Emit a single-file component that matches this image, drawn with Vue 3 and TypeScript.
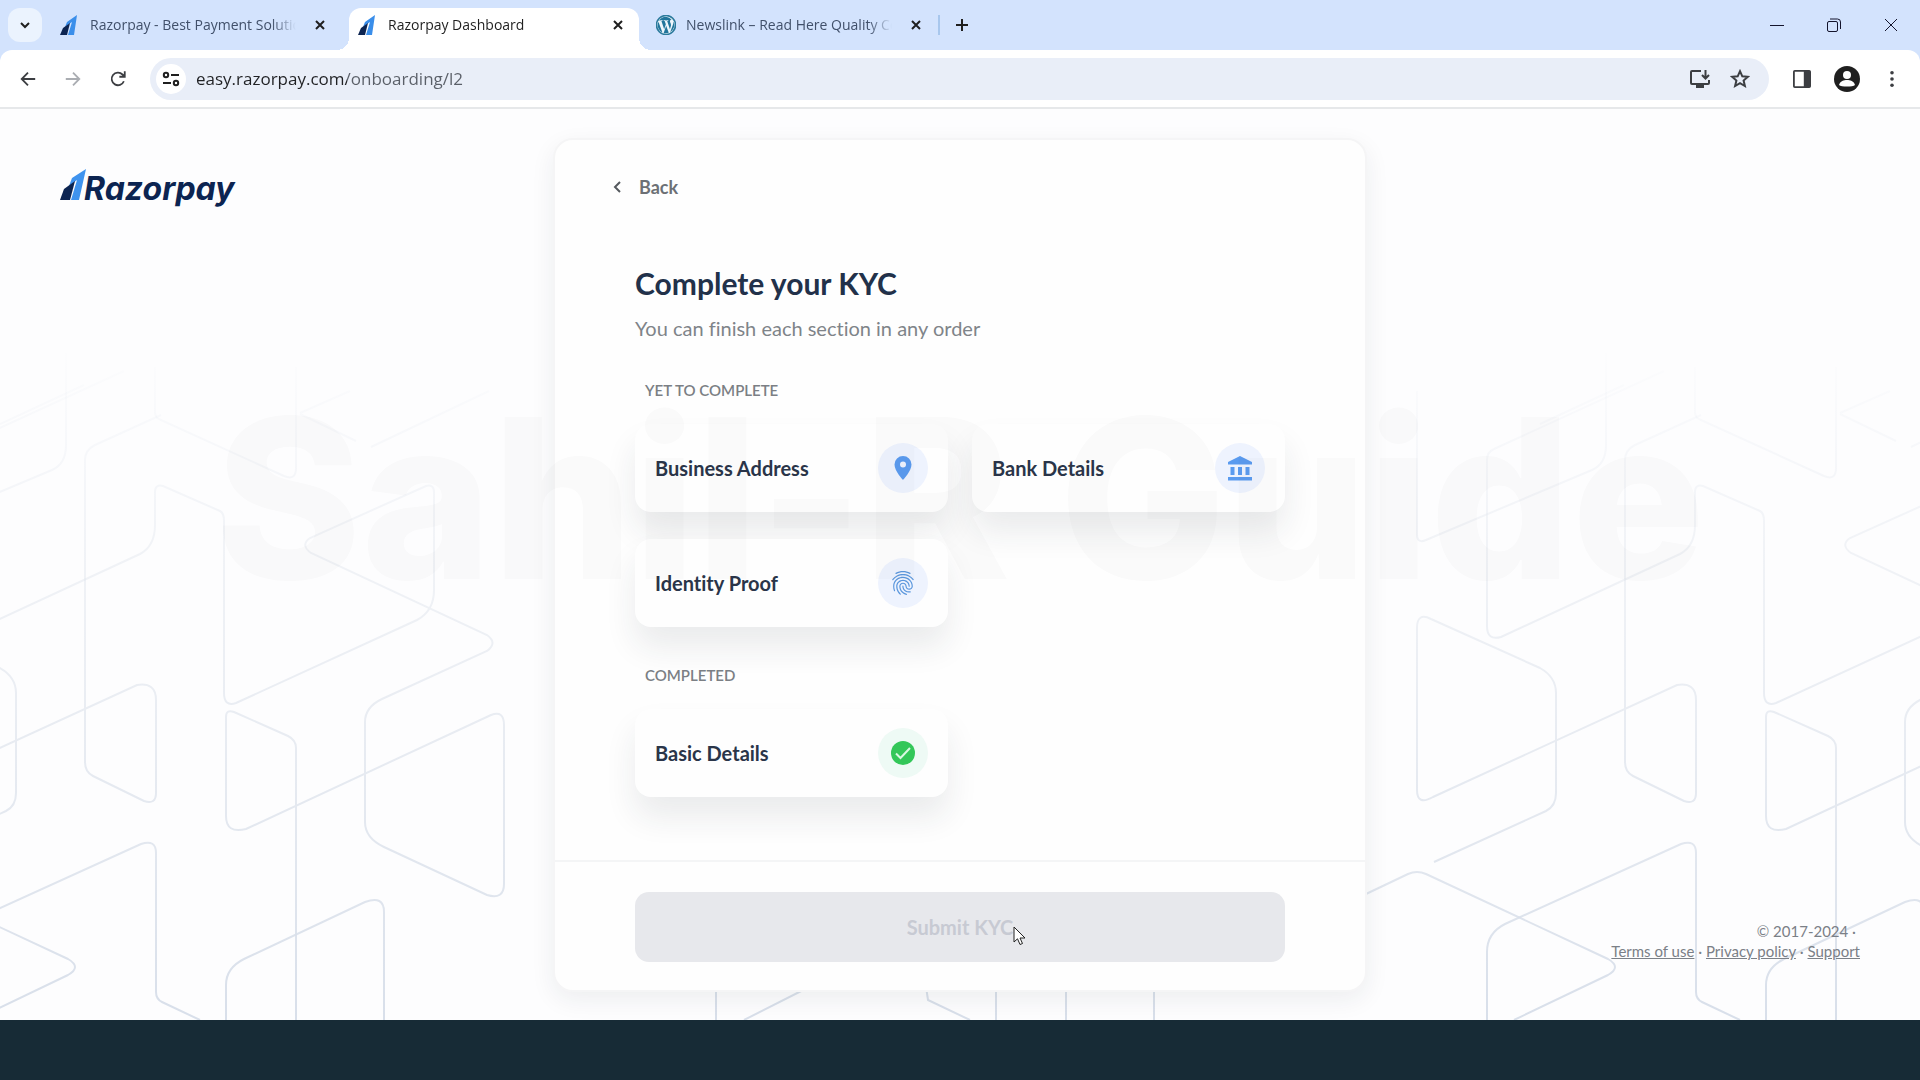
<script setup lang="ts">
import { ref } from 'vue'

interface Tab { title: string; icon: 'razorpay' | 'wordpress'; active: boolean }
interface Section { title: string; icon: 'pin' | 'bank' | 'finger' | 'check' }

const tabs: Tab[] = [
  { title: 'Razorpay - Best Payment Solution', icon: 'razorpay', active: false },
  { title: 'Razorpay Dashboard', icon: 'razorpay', active: true },
  { title: 'Newslink – Read Here Quality Content', icon: 'wordpress', active: false },
]

const url = ref('easy.razorpay.com/onboarding/l2')

const pending: Section[] = [
  { title: 'Business Address', icon: 'pin' },
  { title: 'Bank Details', icon: 'bank' },
  { title: 'Identity Proof', icon: 'finger' },
]
const completed: Section[] = [{ title: 'Basic Details', icon: 'check' }]
const groups = [
  { label: 'YET TO COMPLETE', items: pending },
  { label: 'COMPLETED', items: completed },
]

// Outlines of the backdrop; the set repeats every 1540 units.
const outlines: string[] = [
  'M1417 391V534Q1417 544 1426 540L1592 470Q1606 464 1606 445V353',
  'M1664 371L1494 449Q1487 452 1487 460V626Q1487 641 1501 637L1680 554Q1695 546 1695 525V492Q1695 484 1703 486L1760 511Q1764 513 1764 521V693Q1764 707 1776 703L1957 620Q1974 611 1974 590V492Q1974 484 1966 486L1850 538Q1840 545 1851 553L2027 635Q2038 643 2027 651L1922 699Q1905 707 1905 722V822Q1905 838 1924 847L2027 895Q2044 900 2044 884V725Q2044 710 2031 715L1786 829Q1766 834 1766 816V717Q1766 709 1774 712L1828 736Q1836 740 1836 748V1020',
  'M1701 415L1635 445Q1625 450 1625 460V762Q1625 772 1633 776L1684 801Q1696 805 1696 793V700Q1696 682 1677 685L1433 797Q1417 806 1417 790V628Q1417 612 1431 619L1540 668Q1556 677 1556 693V793Q1556 806 1546 811L1434 862',
  'M1366 894L1408 874Q1417 870 1426 874L1608 959Q1622 967 1608 975L1514 1020',
  'M1487 1020V952Q1487 933 1505 924L1681 844Q1696 839 1696 853V992Q1696 999 1702 1002L1740 1020',
  'M1766 1020V985Q1766 968 1784 959L1905 902Q1924 895 1924 912V1020',
  'M1695 367V412Q1695 418 1701 420L1824 476Q1836 481 1836 468V367',
  'M1540 424L1624 385M1840 413L1890 391M1911 447L2029 391M1840 414L1896 441',
]
</script>

<template>
  <div class="app">
    <header class="browser">
      <div class="strip">
        <button class="search" aria-label="Search tabs">
          <svg width="12" height="12" viewBox="0 0 12 12"><path d="M2 4l4 4 4-4" /></svg>
        </button>
        <div v-for="t in tabs" :key="t.title" class="tab" :class="{ active: t.active }">
          <div class="tab-body">
            <svg v-if="t.icon === 'razorpay'" class="fav" viewBox="0 0 20 20">
              <path d="M17 0L7 7 5 12l7-5-4 13h6z" fill="#3a8eea" />
              <path d="M3 13L10 8 7 20H0z" fill="#0c2451" />
            </svg>
            <svg v-else class="fav" viewBox="0 0 24 24">
              <circle cx="12" cy="12" r="11.4" fill="#eef6fb" stroke="#2b7a9c" />
              <path fill="#21759b" d="M12 2C8.500 2 5.400 3.800 3.700 6.500c2 .1 3.800-.1 3.800-.1.500 0 .600.700 0 .7l-1 .1 3.300 10 2-6-1.400-4c-.5 0-.9-.1-.9-.1-.500 0-.4-.8 0-.7 0 0 1.500.1 2.400.1l2.500-.1c.5 0 .5.700 0 .7l-1 .1 3.300 9.900.9-3c1.200-3.600-.8-4.700-.8-6.300 0-1.300.9-2.200 1.900-2.300A10 10 0 0 0 12 2zM2.900 8A10 10 0 0 0 7.700 21zM12.200 13L9.200 21.600a10 10 0 0 0 6.100-.2zM20.900 7.500c.2 1.400-.1 2.900-.7 4.500L17 20.600A10 10 0 0 0 20.900 7.500z" />
            </svg>
            <span class="tab-title">{{ t.title }}</span>
            <button class="tab-close" aria-label="Close tab">
              <svg width="10" height="10" viewBox="0 0 10 10"><path d="M1 1l8 8M9 1l-8 8" /></svg>
            </button>
          </div>
        </div>
        <span class="rule"></span>
        <button class="new" aria-label="New tab">
          <svg width="14" height="14" viewBox="0 0 14 14"><path d="M7 1v12M1 7h12" /></svg>
        </button>
        <div class="window">
          <button aria-label="Minimize"><svg width="14" height="14" viewBox="0 0 14 14"><path d="M0 7.500h14" /></svg></button>
          <button aria-label="Restore"><svg width="14" height="14" viewBox="0 0 14 14"><rect x=".5" y="3.500" width="10" height="10" rx="1.500" /><path d="M3 1h7.500a3 3 0 0 1 3 3v7" /></svg></button>
          <button aria-label="Close"><svg width="14" height="14" viewBox="0 0 14 14"><path d="M1 1l12 12M13 1L1 13" /></svg></button>
        </div>
      </div>
      <div class="toolbar">
        <button class="tool" aria-label="Back"><svg viewBox="0 0 20 20"><path d="M18 10H3M10 3l-7 7 7 7" /></svg></button>
        <button class="tool off" aria-label="Forward"><svg viewBox="0 0 20 20"><path d="M2 10h15M10 3l7 7-7 7" /></svg></button>
        <button class="tool" aria-label="Reload"><svg viewBox="0 0 20 20"><path d="M16.500 12.500a7 7 0 1 1-1.500-7.500l2 2M17.500 1.500V7.500h-6" /></svg></button>
        <div class="omnibox">
          <button class="site" aria-label="View site information">
            <svg width="18" height="16" viewBox="0 0 18 16"><circle cx="4" cy="4" r="2.200" /><path d="M9 4h8M1 12h8" /><circle cx="14" cy="12" r="2.200" /></svg>
          </button>
          <input v-model="url" class="url" type="text" aria-label="Address" />
          <button class="act" aria-label="Install">
            <svg width="22" height="20" viewBox="0 0 22 20"><path d="M12 2H3a1 1 0 0 0-1 1v11a1 1 0 0 0 1 1h16a1 1 0 0 0 1-1v-3M16.500 1v8M13 6l3.500 3.500L20 6" /><path class="solid" d="M7 15h8v4H7z" /></svg>
          </button>
          <button class="act" aria-label="Bookmark">
            <svg width="20" height="20" viewBox="0 0 20 20"><path d="M10 2.200l2.300 5.100 5.500.5-4.200 3.700 1.300 5.500-4.900-2.900L5.100 17l1.300-5.500-4.200-3.700 5.500-.5z" /></svg>
          </button>
        </div>
        <button class="tool" aria-label="Side panel"><svg viewBox="0 0 20 20"><rect x="1" y="1" width="18" height="18" rx="1" /><path class="solid" d="M12 1h7v18h-7z" /></svg></button>
        <button class="tool" aria-label="Profile">
          <svg class="avatar" viewBox="0 0 26 26"><circle cx="13" cy="13" r="13" fill="#1f1f1f" /><circle cx="13" cy="9" r="4" fill="#fff" /><path d="M5 19c1-4 5-5 8-5s7 1 8 5c-2 2-14 2-16 0z" fill="#fff" /></svg>
        </button>
        <button class="tool" aria-label="Menu"><svg viewBox="0 0 20 20"><g class="dots"><circle cx="10" cy="3" r="2" /><circle cx="10" cy="10" r="2" /><circle cx="10" cy="17" r="2" /></g></svg></button>
      </div>
    </header>

    <main class="page">
      <svg class="backdrop" viewBox="0 109 1920 911" preserveAspectRatio="xMidYMax slice" aria-hidden="true">
        <defs>
          <linearGradient id="fade" gradientUnits="userSpaceOnUse" x1="0" y1="340" x2="0" y2="1020">
            <stop offset="0" stop-color="#dde3ee" stop-opacity="0" />
            <stop offset=".3" stop-color="#dfe4ec" stop-opacity=".4" />
            <stop offset="1" stop-color="#d8dfea" />
          </linearGradient>
          <g id="outlines"><path v-for="d in outlines" :key="d" :d="d" /></g>
        </defs>
        <g fill="none" stroke="url(#fade)" stroke-width="2">
          <use href="#outlines" />
          <g><path v-for="d in outlines" :key="d" :d="d" transform="translate(-1540 0)" /></g>
          <path d="M716 980V1020M823 980L744 1020M925 980L928 1000L970 1020M996 980V1020M1066 980V1020M1154 980V1020" />
        </g>
      </svg>

      <a class="brand" href="#" aria-label="Razorpay">
        <svg width="26" height="31" viewBox="0 0 26 31">
          <path d="M26 0L12 9l-3 8 8-6-6 20h8z" fill="#3f93ee" />
          <path d="M4 20L15 12 10 31H0z" fill="#0c2451" />
        </svg>
        <span>Razorpay</span>
      </a>

      <section class="card">
        <div class="content">
          <button class="back">
            <svg width="8" height="12" viewBox="0 0 8 12"><path d="M7 1L2 6l5 5" /></svg>
            Back
          </button>
          <h1>Complete your KYC</h1>
          <p class="lead">You can finish each section in any order</p>
          <template v-for="g in groups" :key="g.label">
            <h2>{{ g.label }}</h2>
            <div class="grid">
              <button v-for="s in g.items" :key="s.title" class="tile">
                <span>{{ s.title }}</span>
                <span class="badge" :class="s.icon">
                  <svg v-if="s.icon === 'pin'" viewBox="0 0 24 24"><path fill="#5a9bef" fill-rule="evenodd" d="M12 0a8.500 8.500 0 0 0-8.500 8.500C3.500 15 12 24 12 24s8.500-9 8.500-15.500A8.500 8.500 0 0 0 12 0zm0 5.500a3 3 0 1 1 0 6 3 3 0 0 1 0-6z" /></svg>
                  <svg v-else-if="s.icon === 'bank'" viewBox="0 0 24 24"><path fill="#5a9bef" d="M12 0L0 6v2.500h24V6zM2.500 11h4v8h-4zM10 11h4v8h-4zM17.500 11h4v8h-4zM0 21h24v3.500H0z" /></svg>
                  <svg v-else-if="s.icon === 'finger'" viewBox="2 2 20 20"><path fill="#5b97dd" d="M17.810 4.470c-.08 0-.16-.02-.23-.06C15.660 3.420 14 3 12.010 3c-1.980 0-3.860.470-5.570 1.410-.24.130-.54.040-.68-.2-.13-.24-.04-.55.2-.68C7.820 2.520 9.860 2 12.010 2c2.130 0 3.990.470 6.030 1.520.250.130.340.430.210.670-.09.180-.26.280-.44.280zM3.500 9.720c-.1 0-.2-.03-.29-.09-.23-.16-.28-.47-.12-.7.990-1.400 2.250-2.500 3.750-3.270C9.980 4.040 14 4.030 17.150 5.650c1.500.770 2.760 1.860 3.750 3.250.160.220.110.540-.12.700-.23.160-.54.110-.7-.12-.9-1.260-2.040-2.250-3.390-2.940-2.870-1.470-6.540-1.470-9.400.01-1.360.7-2.500 1.700-3.400 2.960-.08.140-.23.210-.39.210zm6.250 12.070c-.13 0-.26-.05-.35-.15-.87-.87-1.340-1.430-2.010-2.640-.69-1.230-1.050-2.730-1.050-4.340 0-2.970 2.540-5.390 5.660-5.390s5.660 2.420 5.660 5.390c0 .28-.22.5-.5.5s-.5-.22-.5-.5c0-2.420-2.090-4.390-4.660-4.390-2.570 0-4.660 1.970-4.660 4.390 0 1.440.32 2.770.93 3.850.64 1.150 1.080 1.640 1.850 2.420.19.2.19.51 0 .71-.11.1-.24.15-.37.15zm7.170-1.850c-1.190 0-2.240-.3-3.100-.89-1.490-1.010-2.380-2.650-2.380-4.390 0-.28.22-.5.5-.5s.5.22.5.5c0 1.410.72 2.740 1.940 3.560.71.48 1.540.71 2.540.71.24 0 .64-.03 1.040-.1.27-.05.53.13.58.41.05.27-.13.53-.41.58-.57.11-1.070.12-1.210.12zM14.910 22c-.04 0-.09-.01-.13-.02-1.590-.44-2.630-1.030-3.720-2.100-1.400-1.390-2.170-3.240-2.170-5.220 0-1.620 1.380-2.940 3.080-2.940 1.700 0 3.080 1.320 3.080 2.940 0 1.070.93 1.940 2.080 1.940s2.080-.87 2.080-1.940c0-3.770-3.250-6.830-7.250-6.830-2.840 0-5.440 1.580-6.610 4.030-.39.81-.59 1.760-.59 2.800 0 .78.07 2.010.67 3.610.1.26-.03.55-.29.64-.26.1-.55-.04-.64-.29-.49-1.310-.73-2.610-.73-3.960 0-1.200.23-2.290.68-3.240 1.330-2.790 4.280-4.600 7.510-4.600 4.550 0 8.250 3.510 8.250 7.830 0 1.620-1.380 2.940-3.080 2.940s-3.080-1.320-3.080-2.940c0-1.070-.93-1.940-2.080-1.940s-2.080.87-2.080 1.940c0 1.710.66 3.310 1.870 4.510.95.94 1.860 1.460 3.270 1.850.27.07.42.35.35.61-.05.23-.26.38-.47.38z" /></svg>
                  <svg v-else viewBox="0 0 24 24"><circle cx="12" cy="12" r="12" fill="#33c759" /><path fill="none" stroke="#d9f8e2" stroke-width="2" d="M5 12.500l4.500 4.500L19 7" /></svg>
                </span>
              </button>
            </div>
          </template>
        </div>
        <div class="submit">
          <button disabled>Submit KYC</button>
        </div>
      </section>

      <footer>
        <p>© 2017-2024 ·</p>
        <p><a href="#">Terms of use</a> · <a href="#">Privacy policy</a> · <a href="#">Support</a></p>
      </footer>
    </main>
    <div class="taskbar"></div>

    <div class="watermark" aria-hidden="true">Sahil-R Guide</div>
    <svg class="cursor" width="13" height="20" viewBox="0 0 13 20"><path d="M1 1v15l3.500-3.200 2.500 5.700 2.500-1-2.500-5.500H12z" fill="#fff" stroke="#222" /></svg>
  </div>
</template>

<style>
body { margin: 0; }
</style>

<style scoped>
* { box-sizing: border-box; }
button { border: 0; padding: 0; background: none; font: inherit; color: inherit; display: flex; align-items: center; justify-content: center; }
h1, h2, p { margin: 0; }
.app { position: relative; min-height: 100vh; display: flex; flex-direction: column; overflow: hidden; background: #fdfdfe; font-family: Lato, "Liberation Sans", sans-serif; font-variant-ligatures: none; }

.browser { background: #d3e3fd; font-family: "Open Sans", "Noto Sans", sans-serif; color: #1f1f1f; }
.browser svg { fill: none; stroke: currentColor; stroke-width: 2; }
.strip { display: flex; align-items: center; height: 50px; padding-left: 8px; }
.search { width: 34px; height: 34px; border-radius: 12px; background: #ebf3fe; margin-right: 5px; }
.tab { width: 298px; height: 50px; padding: 8px 4px 0; }
.tab-body { position: relative; height: 42px; padding: 0 11px 8px 9px; display: flex; align-items: center; gap: 10px; color: #41506a; }
.active .tab-body { background: #fff; color: #1f1f1f; border-radius: 12px 12px 0 0; }
.active .tab-body::before, .active .tab-body::after { content: ""; position: absolute; bottom: 0; width: 12px; height: 12px; }
.active .tab-body::before { right: 100%; background: radial-gradient(circle at 0 0, transparent 12px, #fff 12px); }
.active .tab-body::after { left: 100%; background: radial-gradient(circle at 100% 0, transparent 12px, #fff 12px); }
.browser .fav { width: 20px; height: 20px; stroke: none; flex: none; }
.tab-title { flex: 1; overflow: hidden; white-space: nowrap; font-size: 14px; line-height: 20px; mask-image: linear-gradient(to right, #000 calc(100% - 28px), transparent calc(100% - 4px)); }
.tab-close { width: 20px; height: 20px; color: #1f1f1f; }
.rule { width: 2px; height: 20px; background: #a8c7ed; margin-right: 12px; margin-left: -3px; }
.new { width: 20px; height: 20px; }
.window { margin-left: auto; padding-right: 1px; display: flex; color: #14142c; }
.window button { width: 57px; height: 50px; }
.browser .window svg { stroke-width: 1; }
.toolbar { display: flex; align-items: center; height: 59px; padding: 0 6px 0 5px; background: #fff; border-radius: 12px 12px 0 0; border-bottom: 2px solid #e6e8ea; color: #3c3e42; }
.tool { width: 45px; height: 42px; }
.tool svg { width: 18px; height: 18px; }
.tool .avatar { width: 26px; height: 26px; stroke: none; }
.off { color: #aaadb2; }
.solid, .dots { fill: currentColor; stroke: none; }
.omnibox { flex: 1; display: flex; align-items: center; height: 42px; margin: 0 10px; padding: 0 18px 0 6px; gap: 18px; border-radius: 21px; background: #e9eef8; }
.site { width: 30px; height: 30px; border-radius: 15px; background: #fff; color: #1f1f1f; }
.url { flex: 1; min-width: 0; margin-left: -8px; padding: 0; border: 0; outline: 0; font: 17px/28px "Open Sans", "Noto Sans", sans-serif; color: transparent; background: linear-gradient(to right, #202124 151px, #5a5f68 151px); background-clip: text; -webkit-background-clip: text; }
.act { width: 22px; height: 22px; }

.page { position: relative; flex: 1; display: grid; grid-template-columns: 1fr 814px 1fr; padding: 29px 0 28px; }
.backdrop { position: absolute; inset: 0; width: 100%; height: 100%; }
.brand { position: relative; display: flex; align-self: start; margin: 31px 0 0 60px; text-decoration: none; color: #0c2451; font: italic 700 32px/40px Inter, Lato, sans-serif; }
.brand span { margin-left: -2px; }
.card { position: relative; border-radius: 20px; background: #fefefe; border: 2px solid #f5f5f6; box-shadow: 0 8px 24px rgba(30, 40, 60, .07); }
.content { padding: 35px 80px 63px; }
.back { height: 24px; margin-left: -22px; gap: 18px; font-size: 18px; font-weight: 700; color: #6c7075; }
.back svg { fill: none; stroke: #55595e; stroke-width: 2; }
h1 { margin-top: 64px; font-size: 30px; line-height: 40px; font-weight: 700; color: #22314a; }
.lead { margin-top: 11px; font-size: 20px; line-height: 28px; color: #7f8489; }
h2 { margin: 38px 10px 24px; font-size: 15px; line-height: 20px; font-weight: 600; color: #7b7f84; }
.grid { display: grid; grid-template-columns: 1fr 1fr; gap: 27px 24px; }
.tile { height: 88px; padding: 0 20px; justify-content: space-between; border-radius: 16px; background: #fefefe; font-size: 20px; font-weight: 700; color: #2a3549; box-shadow: 0 20px 32px rgba(30, 40, 50, .09); }
.badge { display: flex; align-items: center; justify-content: center; width: 50px; height: 50px; border-radius: 25px; background: #eef3fe; }
.badge svg { width: 24px; height: 24px; overflow: visible; }
.check { background: #eefaf5; }
.submit { border-top: 2px solid #f4f5f6; padding: 30px 80px 28px; }
.submit button { width: 100%; height: 70px; border-radius: 14px; background: #e7e8ec; font-size: 20px; font-weight: 700; color: #c7cad3; }
footer { position: relative; align-self: end; margin: 0 60px 31px 0; text-align: right; font-size: 15px; line-height: 20px; color: #7b8087; }
footer p:first-child { margin-right: 4px; }
footer a { color: inherit; }
.taskbar { height: 60px; background: #172b36; }
.watermark { position: absolute; top: 414px; left: 0; right: 0; text-align: center; white-space: nowrap; font: 800 222px/170px Inter, "Liberation Sans", sans-serif; color: rgba(60, 70, 60, .02); pointer-events: none; }
.cursor { position: absolute; left: 1013px; top: 926px; }
</style>
